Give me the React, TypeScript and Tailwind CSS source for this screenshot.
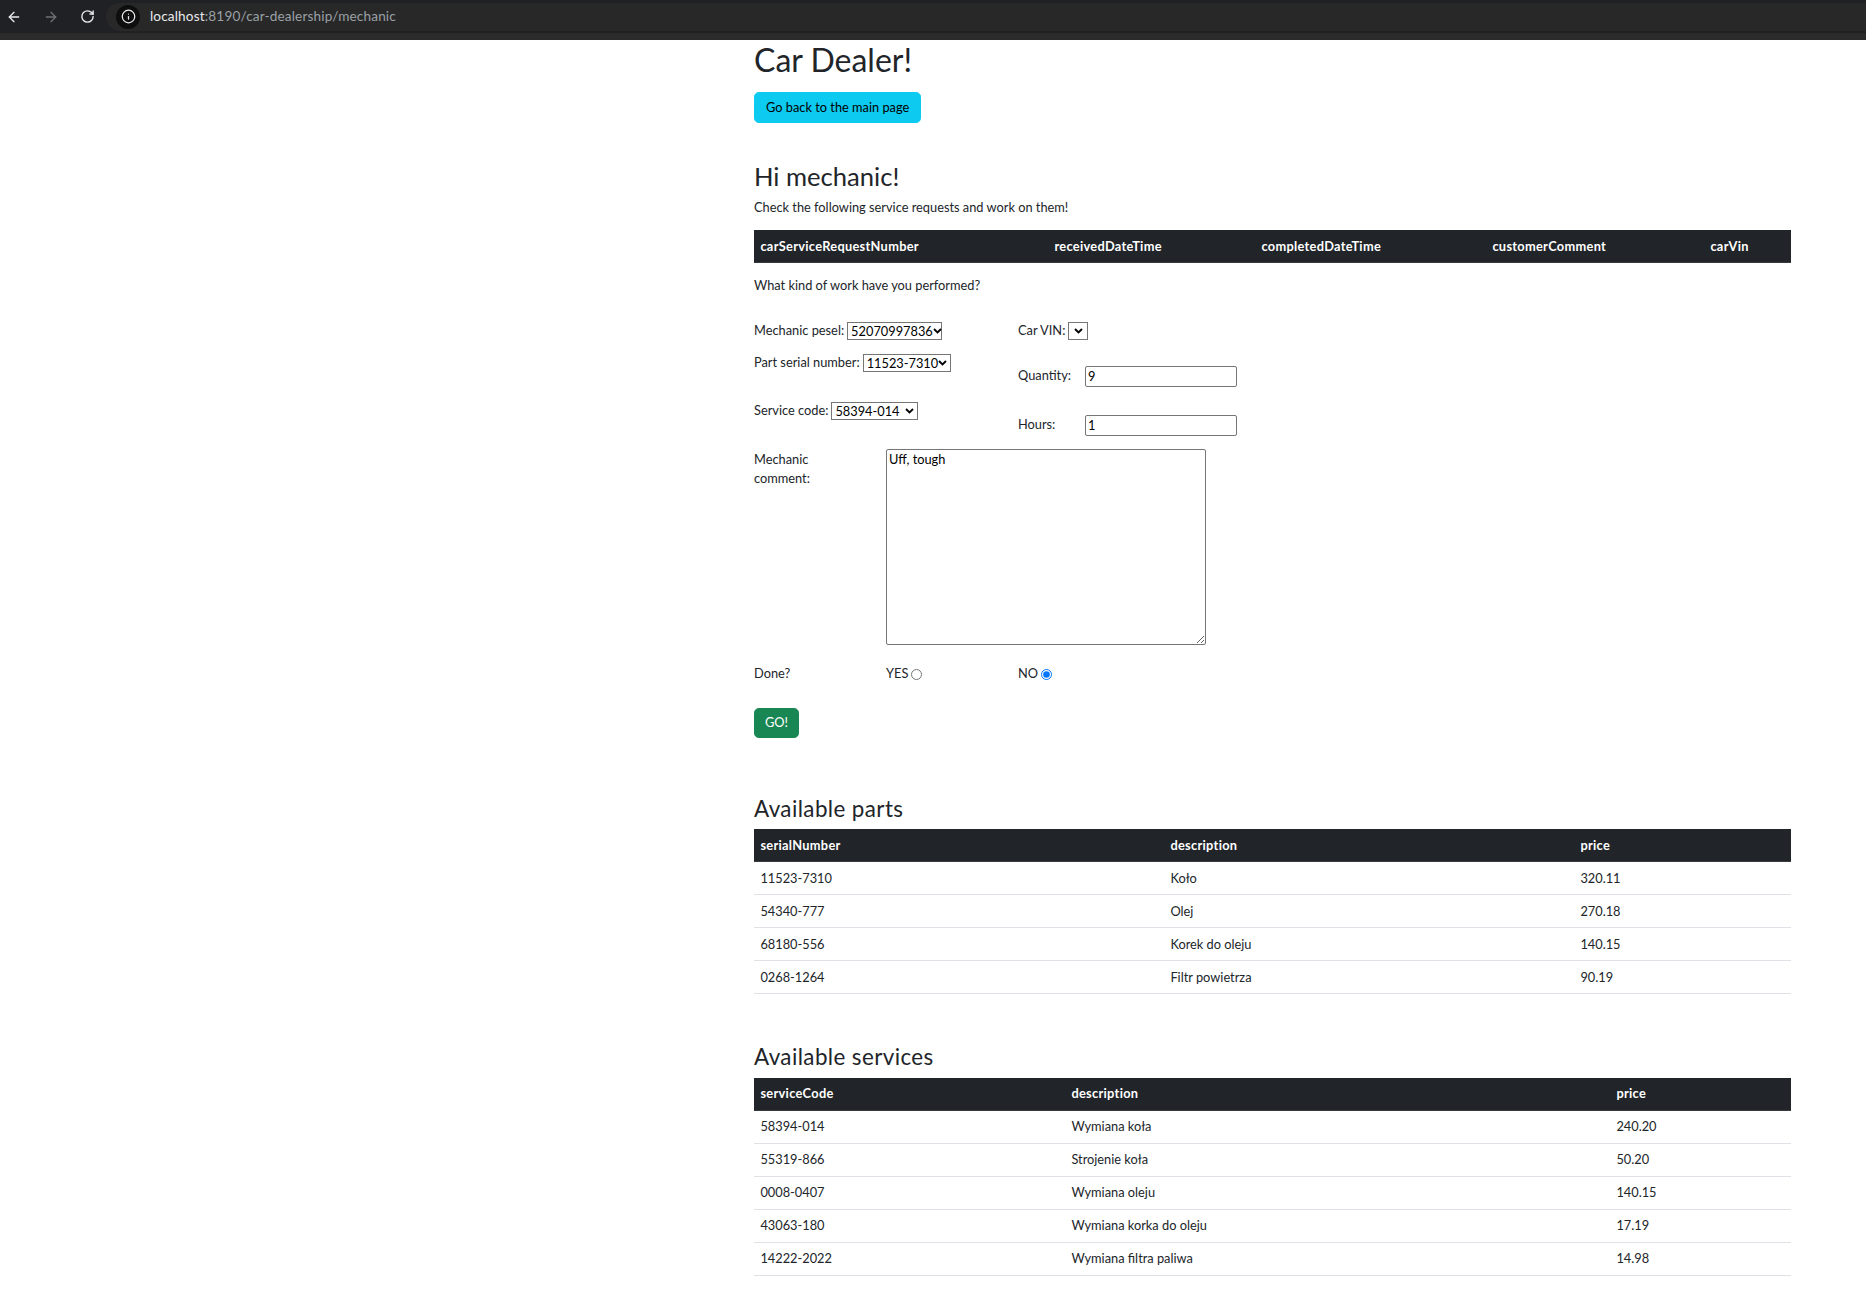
import React from "react";
import { ArrowLeft, ArrowRight, RotateCw, Info } from "lucide-react";

function Chevron() {
  return (
    <svg width="9" height="6" viewBox="0 0 9 6" className="shrink-0">
      <path d="M1 1 L4.5 4.5 L8 1" fill="none" stroke="#000" strokeWidth="1.8" />
    </svg>
  );
}

function FakeSelect({ value, className }: { value: string; className: string }) {
  return (
    <span
      className={
        "inline-flex h-[18px] items-center justify-between whitespace-nowrap border border-[#767676] bg-white pl-[3px] pr-[3px] text-[12.8px] leading-none text-black " +
        className
      }
    >
      <span>{value}</span>
      <Chevron />
    </span>
  );
}

function BrowserChrome() {
  return (
    <div className="flex h-[40px] flex-col bg-[#202124]">
      <div className="flex h-[33px] items-center pl-[6px]">
        <div className="flex items-center gap-[21px]">
          <ArrowLeft size={16} color="#e8eaed" strokeWidth={2} />
          <ArrowRight size={16} color="#6f7175" strokeWidth={2} />
          <RotateCw size={15} color="#e8eaed" strokeWidth={2.2} />
        </div>
        <div className="ml-[11px] flex h-[28px] flex-1 items-center rounded-l-full bg-[#282828] pl-[10px]">
          <div className="flex h-[24px] w-[24px] items-center justify-center rounded-full bg-[#0e0e0e]">
            <Info size={15} color="#e8eaed" strokeWidth={2} />
          </div>
          <div className="ml-[10px] font-['Segoe_UI',Lato,sans-serif] text-[13.6px] tracking-[0.15px]">
            <span className="text-[#e8eaed]">localhost</span>
            <span className="text-[#9aa0a6]">:8190/car-dealership/mechanic</span>
          </div>
        </div>
      </div>
      <div className="h-[7px] bg-[#2b2b2b]" />
    </div>
  );
}

const parts = [
  ["11523-7310", "Koło", "320.11"],
  ["54340-777", "Olej", "270.18"],
  ["68180-556", "Korek do oleju", "140.15"],
  ["0268-1264", "Filtr powietrza", "90.19"],
];

const services = [
  ["58394-014", "Wymiana koła", "240.20"],
  ["55319-866", "Strojenie koła", "50.20"],
  ["0008-0407", "Wymiana oleju", "140.15"],
  ["43063-180", "Wymiana korka do oleju", "17.19"],
  ["14222-2022", "Wymiana filtra paliwa", "14.98"],
];

function Th({ children }: { children: React.ReactNode }) {
  return (
    <th className="border-b border-[#373b3e] bg-[#212529] px-[6.4px] py-[6.4px] text-left font-bold tracking-[0.3px] text-white">
      {children}
    </th>
  );
}

function Td({ children }: { children: React.ReactNode }) {
  return <td className="border-b border-[#dee2e6] px-[6.4px] py-[6.4px]">{children}</td>;
}

export default function App() {
  return (
    <div className="min-h-[1315px] bg-white font-[Lato,sans-serif] text-[12.8px] leading-[19.2px] text-[#212529]">
      <BrowserChrome />
      <main className="ml-[754px] w-[1037px] pb-[40px] pt-[1px]">
        <h1 className="mb-[12.6px] text-[32px] font-normal leading-[38.4px]">Car Dealer!</h1>
        <button className="flex h-[31px] items-center rounded-[4.8px] border border-[#0dcaf0] bg-[#0dcaf0] px-[11px] text-black">
          Go back to the main page
        </button>

        <h2 className="mb-[6.4px] mt-[38px] text-[25.6px] font-normal leading-[30.72px]">Hi mechanic!</h2>
        <p className="mb-[12.8px]">Check the following service requests and work on them!</p>

        <table className="mb-[12.8px] w-full table-fixed border-collapse">
          <colgroup>
            <col className="w-[294px]" />
            <col className="w-[207px]" />
            <col className="w-[231px]" />
            <col className="w-[218px]" />
            <col />
          </colgroup>
          <thead>
            <tr>
              <Th>carServiceRequestNumber</Th>
              <Th>receivedDateTime</Th>
              <Th>completedDateTime</Th>
              <Th>customerComment</Th>
              <Th>carVin</Th>
            </tr>
          </thead>
        </table>

        <p>What kind of work have you performed?</p>

        <form className="mt-[26px]" onSubmit={(e) => e.preventDefault()}>
          <div className="flex items-start">
            <div className="flex w-[264px] flex-col">
              <div className="flex h-[20px] items-center gap-[3px]">
                <span>Mechanic pesel:</span>
                <FakeSelect value="52070997836" className="w-[95px]" />
              </div>
              <div className="mt-[12px] flex h-[20px] items-center gap-[3px]">
                <span>Part serial number:</span>
                <FakeSelect value="11523-7310" className="w-[88px]" />
              </div>
              <div className="mt-[28px] flex h-[20px] items-center gap-[3px]">
                <span>Service code:</span>
                <FakeSelect value="58394-014" className="w-[87px]" />
              </div>
            </div>
            <div className="flex flex-col">
              <div className="flex h-[20px] items-center gap-[3px]">
                <span>Car VIN:</span>
                <FakeSelect value="" className="w-[20px] justify-center" />
              </div>
              <div className="mt-[24px] flex h-[22px] items-center">
                <span className="w-[67px]">Quantity:</span>
                <input
                  defaultValue="9"
                  className="h-[21px] w-[152px] rounded-[2px] border border-[#767676] px-[2px] text-[12.8px] text-black outline-none"
                />
              </div>
              <div className="mt-[27px] flex h-[22px] items-center">
                <span className="w-[67px]">Hours:</span>
                <input
                  defaultValue="1"
                  className="h-[21px] w-[152px] rounded-[2px] border border-[#767676] px-[2px] text-[12.8px] text-black outline-none"
                />
              </div>
            </div>
          </div>

          <div className="mt-[13px] flex items-start">
            <div className="w-[132px] pt-[1px]">
              Mechanic
              <br />
              comment:
            </div>
            <textarea
              defaultValue="Uff, tough"
              className="h-[196px] w-[320px] resize rounded-[2px] border border-[#767676] px-[2px] py-[1px] text-[12.8px] leading-[normal] text-black outline-none"
            />
          </div>

          <div className="mt-[19px] flex h-[20px] items-center">
            <span className="w-[132px]">Done?</span>
            <label className="flex w-[132px] items-center gap-[3px]">
              YES
              <input type="radio" name="done" className="m-0 h-[11px] w-[11px]" />
            </label>
            <label className="flex items-center gap-[3px]">
              NO
              <input type="radio" name="done" defaultChecked className="m-0 h-[11px] w-[11px]" />
            </label>
          </div>

          <button
            type="submit"
            className="mt-[24px] flex h-[30px] items-center rounded-[4.8px] border border-[#198754] bg-[#198754] px-[10px] text-white"
          >
            GO!
          </button>
        </form>

        <h3 className="mb-[6.4px] mt-[58px] text-[22.4px] font-normal leading-[26.88px] tracking-[0.4px]">
          Available parts
        </h3>
        <table className="mb-[12.8px] w-full table-fixed border-collapse">
          <colgroup>
            <col className="w-[410px]" />
            <col className="w-[410px]" />
            <col />
          </colgroup>
          <thead>
            <tr>
              <Th>serialNumber</Th>
              <Th>description</Th>
              <Th>price</Th>
            </tr>
          </thead>
          <tbody>
            {parts.map((r) => (
              <tr key={r[0]}>
                <Td>{r[0]}</Td>
                <Td>{r[1]}</Td>
                <Td>{r[2]}</Td>
              </tr>
            ))}
          </tbody>
        </table>

        <h3 className="mb-[6.4px] mt-[50.2px] text-[22.4px] font-normal leading-[26.88px] tracking-[0.4px]">
          Available services
        </h3>
        <table className="mb-[12.8px] w-full table-fixed border-collapse">
          <colgroup>
            <col className="w-[311px]" />
            <col className="w-[545px]" />
            <col />
          </colgroup>
          <thead>
            <tr>
              <Th>serviceCode</Th>
              <Th>description</Th>
              <Th>price</Th>
            </tr>
          </thead>
          <tbody>
            {services.map((r) => (
              <tr key={r[0]}>
                <Td>{r[0]}</Td>
                <Td>{r[1]}</Td>
                <Td>{r[2]}</Td>
              </tr>
            ))}
          </tbody>
        </table>
      </main>
    </div>
  );
}
